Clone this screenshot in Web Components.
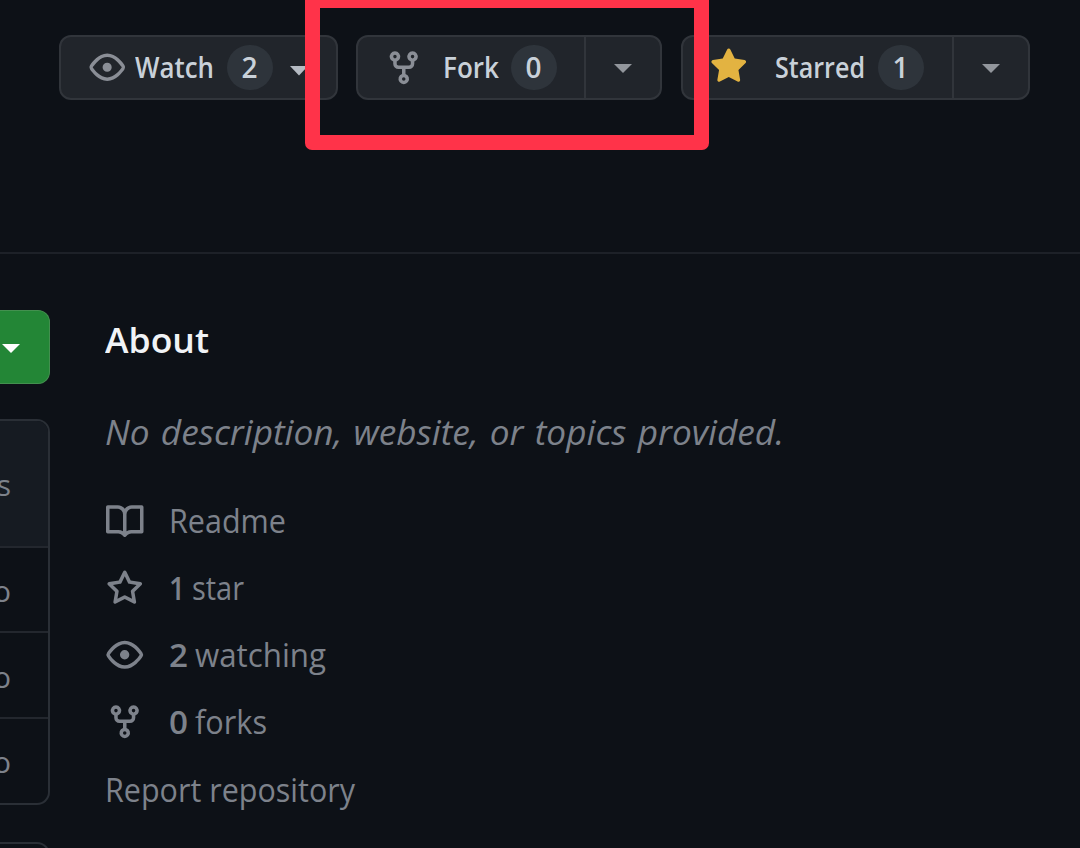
<!DOCTYPE html>
<html lang="en">
<head>
<meta charset="utf-8">
<title>Repository</title>
<style>
html,body{margin:0;background:#0d1117}
body{width:1080px;height:848px;overflow:hidden;font-family:"Open Sans","Noto Sans",sans-serif;color:#c9d1d9}
</style>
</head>
<body>
<repo-page></repo-page>
<script>
const define=(name,html,ready)=>{
  const t=document.createElement('template');t.innerHTML=html;
  customElements.define(name,class extends HTMLElement{
    connectedCallback(){
      if(this.shadowRoot)return;
      this.attachShadow({mode:'open'}).append(t.content.cloneNode(true));
      if(ready)ready(this,this.shadowRoot);
    }
  });
};

const icons={
 eye:'M8 2c1.981 0 3.671.992 4.933 2.078 1.27 1.091 2.187 2.345 2.637 3.023a1.62 1.62 0 0 1 0 1.798c-.45.678-1.367 1.932-2.637 3.023C11.67 13.008 9.981 14 8 14c-1.981 0-3.671-.992-4.933-2.078C1.797 10.83.88 9.576.43 8.898a1.62 1.62 0 0 1 0-1.798c.45-.677 1.367-1.931 2.637-3.022C4.33 2.992 6.019 2 8 2ZM1.679 7.932a.12.12 0 0 0 0 .136c.411.622 1.241 1.75 2.366 2.717C5.176 11.758 6.527 12.5 8 12.5c1.473 0 2.825-.742 3.955-1.715 1.124-.967 1.954-2.096 2.366-2.717a.12.12 0 0 0 0-.136c-.412-.621-1.242-1.75-2.366-2.717C10.824 4.242 9.473 3.5 8 3.5c-1.473 0-2.825.742-3.955 1.715-1.124.967-1.954 2.096-2.366 2.717ZM8 10a2 2 0 1 1-.001-3.999A2 2 0 0 1 8 10Z',
 fork:'M5 5.372v.878c0 .414.336.75.75.75h4.5a.75.75 0 0 0 .75-.75v-.878a2.25 2.25 0 1 1 1.5 0v.878a2.25 2.25 0 0 1-2.25 2.25h-1.5v2.128a2.251 2.251 0 1 1-1.5 0V8.5h-1.5A2.25 2.25 0 0 1 3.5 6.25v-.878a2.25 2.25 0 1 1 1.5 0ZM5 3.25a.75.75 0 1 0-1.5 0 .75.75 0 0 0 1.5 0Zm6.75.75a.75.75 0 1 0 0-1.5.75.75 0 0 0 0 1.5Zm-3 8.75a.75.75 0 1 0-1.5 0 .75.75 0 0 0 1.5 0Z',
 star:'M8 .25a.75.75 0 0 1 .673.418l1.882 3.815 4.21.612a.75.75 0 0 1 .416 1.279l-3.046 2.97.719 4.192a.751.751 0 0 1-1.088.791L8 12.347l-3.766 1.98a.75.75 0 0 1-1.088-.79l.72-4.194L.818 6.374a.75.75 0 0 1 .416-1.28l4.21-.611L7.327.668A.75.75 0 0 1 8 .25Zm0 2.445L6.615 5.5a.75.75 0 0 1-.564.41l-3.097.45 2.24 2.184a.75.75 0 0 1 .216.664l-.528 3.084 2.769-1.456a.75.75 0 0 1 .698 0l2.77 1.456-.53-3.084a.75.75 0 0 1 .216-.664l2.24-2.183-3.096-.45a.75.75 0 0 1-.564-.41L8 2.694Z',
 starfill:'M8 .25a.75.75 0 0 1 .673.418l1.882 3.815 4.21.612a.75.75 0 0 1 .416 1.279l-3.046 2.97.719 4.192a.751.751 0 0 1-1.088.791L8 12.347l-3.766 1.98a.75.75 0 0 1-1.088-.79l.72-4.194L.818 6.374a.75.75 0 0 1 .416-1.28l4.21-.611L7.327.668A.75.75 0 0 1 8 .25Z',
 book:'M0 1.75A.75.75 0 0 1 .75 1h4.253c1.227 0 2.317.59 3 1.501A3.743 3.743 0 0 1 11.006 1h4.245a.75.75 0 0 1 .75.75v10.5a.75.75 0 0 1-.75.75h-4.507a2.25 2.25 0 0 0-1.591.659l-.622.621a.75.75 0 0 1-1.06 0l-.622-.621A2.25 2.25 0 0 0 5.258 13H.75a.75.75 0 0 1-.75-.75Zm7.251 10.324.004-5.073-.002-2.253A2.25 2.25 0 0 0 5.003 2.5H1.5v9h3.757a3.75 3.75 0 0 1 1.994.574ZM8.755 4.75l-.004 7.322a3.752 3.752 0 0 1 1.992-.572H14.5v-9h-3.495a2.25 2.25 0 0 0-2.25 2.25Z'
};

define('octo-icon',`<style>:host{display:block;flex:none;width:37.5px;height:37.5px}svg{display:block;width:100%;height:100%;overflow:visible}</style><svg viewBox="0 0 16 16" fill="currentColor"><path/></svg>`,
 (h,r)=>r.querySelector('path').setAttribute('d',icons[h.getAttribute('name')]||''));

define('drop-caret',`<style>:host{display:block;flex:none;width:18px;height:9px;background:currentColor;clip-path:polygon(0 0,100% 0,50% 100%)}</style>`);

/* Single line of text, condensed or expanded to the width given in "w". */
define('ui-text',`<style>:host{display:block;flex:none;white-space:pre;line-height:1}span{display:inline-block;transform-origin:0 50%}</style><span><slot></slot></span>`,
 (h,r)=>{const w=+h.getAttribute('w'),s=r.querySelector('span');
  if(w){const n=s.getBoundingClientRect().width;h.style.width=w+'px';s.style.transform='scaleX('+w/n+')';}});

define('count-badge',`<style>:host{display:flex;flex:none;box-sizing:border-box;align-items:center;justify-content:center;width:46px;height:45px;border-radius:23px;background:#2e343b;color:#c9d1d9;margin-top:-1px}</style><ui-text><slot></slot></ui-text>`);

define('action-button',`<style>
:host{display:flex;flex:none;box-sizing:border-box;height:65px;border:2px solid #31353b;border-radius:12px;background:#21252b;font-size:28px;font-weight:600;color:#c9d1d9}
.main{display:flex;align-items:center;flex:1}
.menu{display:flex;align-items:center;justify-content:center;box-sizing:border-box;border-left:2px solid #31353b;color:#92969c;padding-top:2px}
:host([plain]) .menu{display:none}
</style><div class="main"><slot></slot></div><div class="menu"><drop-caret></drop-caret></div>`,
 (h,r)=>{r.querySelector('.menu').style.width=(h.getAttribute('menu')||0)+'px'});

define('action-bar',`<style>
:host{display:flex;box-sizing:border-box;height:252px;padding:35px 0 0 59px;border-bottom:0}
.watch{width:279px;margin-right:18px}.fork{width:306px;margin-right:19px}.starred{width:349px}
ui-text{margin-top:-1px}
octo-icon{color:#8a8e96}.watch octo-icon{margin:-1px 9px 0 28px;width:36.5px;height:36.5px}
.watch count-badge{margin-left:13px;margin-right:17px}.watch drop-caret{color:#b5bbc3;margin-top:6px;width:19px;height:10px}
.fork octo-icon{margin:0 20px 0 27px}.fork count-badge{margin-left:12px}
.starred octo-icon{margin:-1px 27px 0 27px;color:#e3b341}.starred count-badge{margin-left:13px}
</style>
<action-button class="watch" plain><octo-icon name="eye"></octo-icon><ui-text w="79">Watch</ui-text><count-badge>2</count-badge><drop-caret></drop-caret></action-button>
<action-button class="fork" menu="76"><octo-icon name="fork"></octo-icon><ui-text w="56">Fork</ui-text><count-badge>0</count-badge></action-button>
<action-button class="starred" menu="76"><octo-icon name="starfill"></octo-icon><ui-text w="90">Starred</ui-text><count-badge>1</count-badge></action-button>`);

define('file-row',`<style>:host{display:flex;box-sizing:border-box;align-items:center;justify-content:flex-end;height:85.4px;padding:3px 37px 0 0;border-top:2px solid #23272e;font-size:30px;color:#7d828b}</style><ui-text><slot></slot></ui-text>`);

define('file-column',`<style>
:host{display:block;width:50px;overflow:hidden}
.code{display:flex;box-sizing:border-box;align-items:center;height:74px;margin-top:56px;padding:3px 0 0 2px;border:1.5px solid #43904f;border-left:0;border-radius:0 12px 12px 0;background:#238636;color:#fff}
.files{box-sizing:border-box;height:386px;margin-top:35px;border:2px solid #2a2f36;border-left:0;border-radius:0 13px 13px 0;overflow:hidden}
.head{border-top:0;height:125px;background:#161b22;padding-top:2px}
.next{box-sizing:border-box;height:30px;margin-top:37px;border:2px solid #2a2f36;border-left:0;border-radius:0 13px 0 0}
</style>
<div class="code"><drop-caret></drop-caret></div>
<div class="files"><file-row class="head">s</file-row><file-row>o</file-row><file-row>o</file-row><file-row>o</file-row></div>
<div class="next"></div>`);

define('meta-row',`<style>:host{display:flex;align-items:center;height:66.9px;color:#7d828b}octo-icon{margin:2px 26px 0 0}div{display:flex;align-items:center}</style><octo-icon></octo-icon><div><slot></slot></div>`,
 (h,r)=>{const i=r.querySelector('octo-icon');i.shadowRoot.querySelector('path').setAttribute('d',icons[h.getAttribute('icon')])});

define('about-panel',`<style>
:host{display:block;padding:62px 0 0 55.5px;font-size:33px;color:#7d828b}
.title{font-size:35px;font-weight:600;color:#f0f3f6;height:48px;line-height:48px;margin-left:-.5px}
.desc{font-size:34px;font-style:italic;height:48px;line-height:48px;margin:44px 0 31px -.5px;word-spacing:2px}
.num{font-weight:600;margin-right:7px}
.report{height:66px;line-height:66px;margin:2px 0 0 -.5px}
</style>
<ui-text class="title" w="104">About</ui-text>
<ui-text class="desc" w="679">No description, website, or topics provided.</ui-text>
<meta-row icon="book"><ui-text w="117">Readme</ui-text></meta-row>
<meta-row icon="star"><ui-text class="num" w="16">1</ui-text><ui-text w="52">star</ui-text></meta-row>
<meta-row icon="eye"><ui-text class="num" w="19">2</ui-text><ui-text w="131">watching</ui-text></meta-row>
<meta-row icon="fork"><ui-text class="num" w="19">0</ui-text><ui-text w="72">forks</ui-text></meta-row>
<ui-text class="report" w="250">Report repository</ui-text>`);

define('highlight-frame',`<style>:host{display:block;position:absolute;left:305px;top:-7px;width:404px;height:157px;box-sizing:border-box;border:15px solid #ff3349;border-radius:7px}</style>`);

define('repo-page',`<style>
:host{display:block;position:relative;width:1080px;height:848px;overflow:hidden;background:#0d1117}
.body{display:flex;border-top:2px solid #1d2128}
about-panel{flex:1}
</style>
<action-bar></action-bar>
<div class="body"><file-column></file-column><about-panel></about-panel></div>
<highlight-frame></highlight-frame>`);
</script>
</body>
</html>
